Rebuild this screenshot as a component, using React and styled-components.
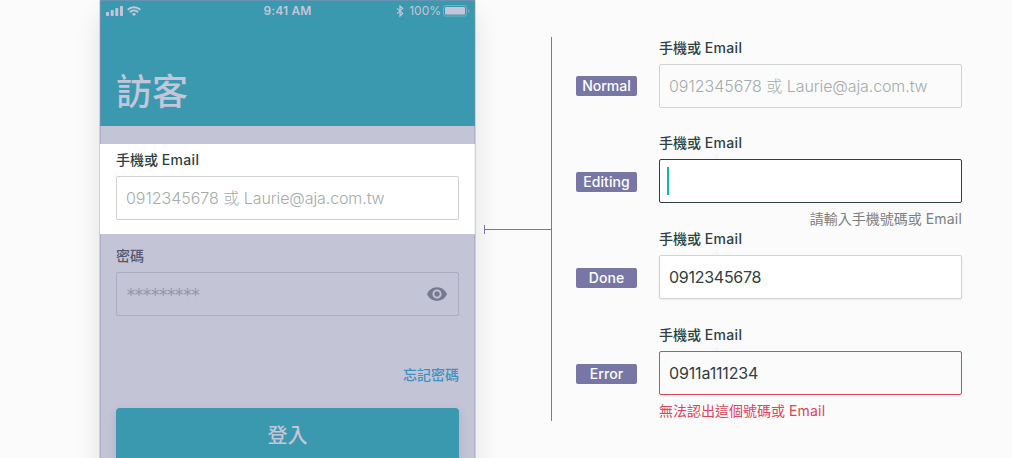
import React from "react";
import styled, { createGlobalStyle } from "styled-components";

const GlobalStyle = createGlobalStyle`
  * { box-sizing: border-box; }
  html, body { margin: 0; overflow: hidden; background: #fbfbfb; }
  body { font-family: Inter, "Noto Sans CJK TC", sans-serif; }
`;

const Page = styled.main`
  display: flex;
  align-items: flex-start;
  width: 1012px;
  height: 458px;
  overflow: hidden;
  padding-left: 100px;
  background: #fbfbfb;
`;

const Phone = styled.section`
  flex: none;
  width: 375px;
  height: 667px;
  background: #c4c4d7;
  box-shadow: 0 0 0 1px rgba(0, 0, 0, 0.12), 0 15px 24px rgba(0, 0, 0, 0.11),
    inset 0 0 0 1px rgba(119, 118, 164, 0.28);
`;

const Header = styled.header`
  height: 126px;
  background: #3a99ae;
  color: #c5c5d9;
  box-shadow: inset 1px 1px 0 rgba(140, 140, 180, 0.55), inset -1px 0 0 rgba(140, 140, 180, 0.4);
`;

const StatusBar = styled.div`
  display: grid;
  grid-template-columns: 1fr auto 1fr;
  align-items: center;
  height: 20px;
  padding: 0 5px 0 6px;
`;

const StatusGroup = styled.div`
  display: flex;
  align-items: center;
  justify-content: ${(p) => (p.$end ? "flex-end" : "flex-start")};
  svg { display: block; }
`;

const Clock = styled.span`
  font-size: 12px;
  line-height: 20px;
  font-weight: 600;
  letter-spacing: 0.15px;
  padding-top: 1px;
  margin-right: 1px;
`;

const BatteryText = styled.span`
  font-size: 12px;
  line-height: 20px;
  padding-top: 1px;
  margin: 0 2px 0 5px;
  letter-spacing: 0;
`;

const Title = styled.h1`
  margin: 46px 0 0 16px;
  font-size: 36px;
  line-height: 52px;
  font-weight: 500;
`;

const Band = styled.div`
  margin-top: 18px;
  height: 90px;
  padding: 6px 16px 0;
  background: #fff;
  box-shadow: inset -1px 0 0 #f3f3f5;
`;

const Password = styled.div`
  padding: 12px 16px 0;
`;

const Label = styled.label`
  display: block;
  margin-bottom: 6px;
  font-size: 14px;
  line-height: 20px;
  font-weight: 500;
  color: ${(p) => (p.$veiled ? "#555870" : "#2e403f")};
`;

const tones = {
  normal: { border: "#cfd4d3", background: "transparent", color: "#a3adaa" },
  editing: { border: "#2e403f", background: "#fff", color: "#2e403f" },
  done: { border: "#cfd4d3", background: "#fff", color: "#2e403f" },
  error: { border: "#e0435a", background: "transparent", color: "#2e403f" },
  veiled: { border: "#adadc2", background: "transparent", color: "#9698ac" },
};

const Input = styled.div`
  display: flex;
  align-items: center;
  justify-content: space-between;
  height: 44px;
  padding: 0 ${(p) => (p.$tone === "veiled" ? 11 : 9)}px 0 ${(p) => (p.$tone === "editing" ? 7 : 9)}px;
  border: 1px solid ${(p) => tones[p.$tone].border};
  border-radius: 2px;
  background: ${(p) => tones[p.$tone].background};
  color: ${(p) => tones[p.$tone].color};
  box-shadow: ${(p) => (p.$tone === "done" ? "0 1px 2px rgba(0, 0, 0, 0.08)" : "none")};
  font-size: 16px;
  line-height: 24px;
  white-space: nowrap;
`;

const Caret = styled.span`
  width: 2px;
  height: 28px;
  background: #12b3b3;
`;

const Hint = styled.div`
  margin-top: 6px;
  font-size: 14px;
  line-height: 20px;
  text-align: ${(p) => (p.$error ? "left" : "right")};
  color: ${(p) => (p.$error ? "#e0435a" : "#7d8080")};
`;

const Forgot = styled.div`
  margin: 49px 16px 0;
  text-align: right;
  font-size: 14px;
  line-height: 20px;
  font-weight: 500;
  color: #4290c0;
`;

const LoginButton = styled.button`
  display: block;
  width: 343px;
  height: 56px;
  margin: 23px 16px 0;
  padding: 0;
  border: 0;
  border-radius: 4px;
  background: #3a99ae;
  color: #c5c5d9;
  font: 500 20px/57px Inter, "Noto Sans CJK TC", sans-serif;
  box-shadow: 0 4px 10px rgba(60, 60, 110, 0.16);
`;

const Connector = styled.div`
  flex: none;
  width: 67px;
  height: 9px;
  margin: 225px 0 0 9px;
  border-left: 1px solid #7776a4;
  background: linear-gradient(#7776a4, #7776a4) 0 4px / 100% 1px no-repeat;
`;

const States = styled.section`
  flex: none;
  height: 384px;
  margin-top: 37px;
  padding: 1px 0 0 24px;
  border-left: 1px solid #7776a4;
`;

const StateRow = styled.div`
  display: flex;
  gap: 22px;
  height: ${(p) => (p.$first ? 95 : 96)}px;
`;

const Badge = styled.span`
  width: 61px;
  height: 20px;
  margin-top: ${(p) => (p.$first ? 38 : 39)}px;
  border-radius: 2px;
  background: #7776a4;
  color: #fff;
  font-size: 14px;
  line-height: 20px;
  font-weight: 500;
  letter-spacing: ${(p) => p.$spacing};
  text-align: center;
`;

const Field = styled.div`
  width: 303px;
`;

const Latin = styled.span`
  letter-spacing: ${(p) => p.$spacing};
`;

const MaskedText = styled.span`
  padding-top: 3px;
  font-size: 20px;
  font-weight: 300;
  letter-spacing: -1.95px;
`;

const SignalIcon = () => (
  <svg width="17" height="10" viewBox="0 0 17 10" fill="currentColor">
    <rect x="0" y="6" width="3" height="4" rx=".8" />
    <rect x="4.7" y="4" width="3" height="6" rx=".8" />
    <rect x="9.3" y="2" width="3" height="8" rx=".8" />
    <rect x="14" y="0" width="3" height="10" rx=".8" />
  </svg>
);

const WifiSvg = styled.svg`
  margin-left: 4px;
`;

const WifiIcon = () => (
  <WifiSvg width="14" height="10" viewBox="0 0 14 10" fill="none" stroke="currentColor" strokeWidth="2">
    <path d="M.7 3.7A9 9 0 0 1 13.3 3.7" />
    <path d="M2.9 6.3A5.8 5.8 0 0 1 11.1 6.3" />
    <path d="M4.8 8A3.2 3.2 0 0 1 9.2 8L7 10.1Z" fill="currentColor" stroke="none" />
  </WifiSvg>
);

const BluetoothIcon = () => (
  <svg width="8" height="12" viewBox="0 0 8 12" fill="none" stroke="currentColor" strokeWidth="1.2">
    <path d="M1 3.4L6.7 8.4L4 11V1L6.7 3.6L1 8.6" />
  </svg>
);

const BatteryIcon = () => (
  <svg width="27" height="12" viewBox="0 0 27 12">
    <rect x=".5" y=".5" width="23" height="10.6" rx="2.2" fill="none" stroke="currentColor" strokeOpacity=".45" />
    <rect x="2" y="2" width="20" height="7.6" rx="1" fill="currentColor" />
    <path d="M25 4.2C26.8 4.8 26.8 7 25 7.5Z" fill="currentColor" fillOpacity=".5" />
  </svg>
);

const EyeIcon = () => (
  <svg width="20" height="14" viewBox="1 4.5 22 15" fill="#747a90">
    <path d="M12 4.5C7 4.5 2.73 7.61 1 12c1.73 4.39 6 7.5 11 7.5s9.27-3.11 11-7.5c-1.73-4.39-6-7.5-11-7.5zM12 17c-2.76 0-5-2.24-5-5s2.24-5 5-5 5 2.24 5 5-2.24 5-5 5zm0-8c-1.66 0-3 1.34-3 3s1.34 3 3 3 3-1.34 3-3-1.34-3-3-3z" />
  </svg>
);

const PlaceholderText = styled.span`
  font-weight: 300;
`;

const ContactLabel = () => (
  <Label>手機或 <Latin $spacing="0.35px">Email</Latin></Label>
);

const Placeholder = () => (
  <PlaceholderText>
    <Latin $spacing="-0.02px">0912345678</Latin> 或 <Latin $spacing="-0.11px">Laurie@aja.com.tw</Latin>
  </PlaceholderText>
);

const states = [
  { name: "Normal", spacing: "0", tone: "normal", content: <Placeholder /> },
  { name: "Editing", spacing: "0.1px", tone: "editing", content: <Caret />, hint: "請輸入手機號碼或" },
  { name: "Done", spacing: "0.1px", tone: "done", content: <Latin $spacing="-0.27px">0912345678</Latin> },
  { name: "Error", spacing: "0.1px", tone: "error", content: <Latin $spacing="-0.15px">0911a111234</Latin>, hint: "無法認出這個號碼或" },
];

export default function App() {
  return (
    <>
      <GlobalStyle />
      <Page>
        <Phone>
          <Header>
            <StatusBar>
              <StatusGroup><SignalIcon /><WifiIcon /></StatusGroup>
              <Clock>9:41 AM</Clock>
              <StatusGroup $end>
                <BluetoothIcon /><BatteryText>100%</BatteryText><BatteryIcon />
              </StatusGroup>
            </StatusBar>
            <Title>訪客</Title>
          </Header>
          <Band>
            <ContactLabel />
            <Input $tone="normal"><Placeholder /></Input>
          </Band>
          <Password>
            <Label $veiled>密碼</Label>
            <Input $tone="veiled"><MaskedText>*********</MaskedText><EyeIcon /></Input>
          </Password>
          <Forgot>忘記密碼</Forgot>
          <LoginButton>登入</LoginButton>
        </Phone>
        <Connector />
        <States>
          {states.map((s, i) => (
            <StateRow key={s.name} $first={i === 0}>
              <Badge $first={i === 0} $spacing={s.spacing}>{s.name}</Badge>
              <Field>
                <ContactLabel />
                <Input $tone={s.tone}>{s.content}</Input>
                {s.hint && (
                  <Hint $error={s.tone === "error"}>
                    {s.hint} <Latin $spacing="0.2px">Email</Latin>
                  </Hint>
                )}
              </Field>
            </StateRow>
          ))}
        </States>
      </Page>
    </>
  );
}
